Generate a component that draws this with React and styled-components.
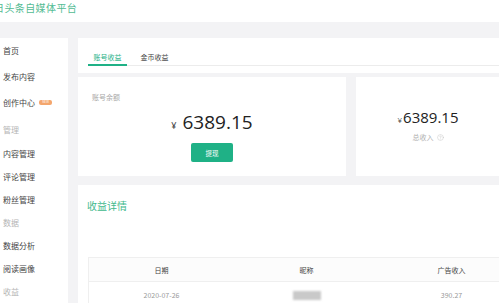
import { createGlobalStyle, styled } from "styled-components";
import { CircleHelp } from "lucide-react";

const GlobalStyle = createGlobalStyle`
  body {
    margin: 0;
    background: #fff;
    font-family: "Noto Sans CJK SC", "Noto Sans", sans-serif;
    overflow: hidden;
  }
`;

const green = "#1fb186";

const Page = styled.div`
  width: 499px;
  height: 303px;
  overflow: hidden;
  display: flex;
  flex-direction: column;
  background: #f3f3f5;
`;

const Header = styled.div`
  height: 22px;
  flex-shrink: 0;
  background: #fff;
  display: flex;
  align-items: flex-start;
  overflow: hidden;
`;

const Title = styled.div`
  margin-top: 1px;
  text-indent: -6px;
  font-size: 10px;
  line-height: 14px;
  color: #52bb93;
  letter-spacing: 0.4px;
  white-space: nowrap;
`;

const Body = styled.div`
  flex: 1;
  display: flex;
  padding-top: 16px;
  min-height: 0;
`;

const Sidebar = styled.div`
  width: 68px;
  flex-shrink: 0;
  background: #fff;
  display: flex;
  flex-direction: column;
`;

const NavItem = styled.div`
  height: ${(p) => p.$h}px;
  flex-shrink: 0;
  display: flex;
  align-items: center;
  gap: 4px;
  padding-left: 3px;
  font-size: 8px;
  color: ${(p) => (p.$heading ? "#b5b5b5" : "#444")};
  white-space: nowrap;
`;

const Badge = styled.span`
  display: inline-block;
  width: 13px;
  height: 5px;
  border-radius: 2px;
  background: #f4a66d;
  font-size: 3px;
  line-height: 5px;
  color: #fff;
  text-align: center;
`;

const Main = styled.div`
  width: 422px;
  margin-left: 10px;
  display: flex;
  flex-direction: column;
  flex-shrink: 0;
`;

const Card = styled.div`
  background: #fff;
  flex-shrink: 0;
`;

const TabCard = styled(Card)`
  height: 35px;
  padding: 0 0 0 10px;
  box-sizing: border-box;
`;

const TabBar = styled.div`
  height: 27px;
  display: flex;
  gap: 8px;
  border-bottom: 1px solid #ececec;
`;

const Tab = styled.div`
  width: 39px;
  box-sizing: border-box;
  padding-top: 14px;
  text-align: center;
  font-size: 7px;
  line-height: 10px;
  color: ${(p) => (p.$active ? green : "#444")};
  border-bottom: 2px solid ${(p) => (p.$active ? green : "transparent")};
  margin-bottom: -1px;
`;

const Row = styled.div`
  margin-top: 4px;
  height: 99px;
  display: flex;
  gap: 10px;
  flex-shrink: 0;
`;

const Balance = styled(Card)`
  width: 268px;
  padding: 15px 14px 0;
  box-sizing: border-box;
  display: flex;
  flex-direction: column;
`;

const Label = styled.div`
  font-size: 7px;
  line-height: 10px;
  color: #a8a8a8;
`;

const Amount = styled.div`
  margin-top: 9px;
  align-self: center;
  font-family: "Open Sans", "Noto Sans", sans-serif;
  font-size: ${(p) => p.$size}px;
  line-height: 22px;
  color: #222;
  display: flex;
  align-items: baseline;
`;

const Yen = styled.span`
  font-size: ${(p) => p.$size}px;
  color: #444;
  margin-right: ${(p) => p.$gap}px;
`;

const Button = styled.div`
  margin-top: 6px;
  align-self: center;
  width: 42px;
  height: 19px;
  border-radius: 2px;
  background: ${green};
  color: #fff;
  font-size: 6.5px;
  display: flex;
  align-items: center;
  justify-content: center;
`;

const Total = styled(Card)`
  flex: 1;
  display: flex;
  flex-direction: column;
  align-items: center;
  padding-top: 29px;
  box-sizing: border-box;
`;

const TotalAmount = styled(Amount)`
  margin-top: 0;
  line-height: 22px;
`;

const TotalLabel = styled(Label)`
  display: flex;
  align-items: center;
  gap: 3px;
  margin-top: 1px;
  color: #b0b0b0;
`;

const Details = styled(Card)`
  margin-top: 9px;
  flex: 1;
  padding: 14px 0 0 10px;
  box-sizing: border-box;
`;

const SectionTitle = styled.div`
  font-size: 10px;
  line-height: 14px;
  color: #3fb98d;
  margin-left: -1px;
`;

const Table = styled.div`
  margin-top: 44px;
  width: 435px;
  border-top: 1px solid #efefef;
  border-left: 1px solid #efefef;
`;

const TRow = styled.div`
  display: grid;
  grid-template-columns: repeat(3, 1fr);
  height: ${(p) => (p.$head ? 23 : 26)}px;
  align-items: center;
  background: ${(p) => (p.$head ? "#fcfcfc" : "#fff")};
  border-bottom: 1px solid #efefef;
`;

const Cell = styled.div`
  text-align: center;
  font-size: 7px;
  color: ${(p) => (p.$head ? "#444" : "#999")};
  display: flex;
  justify-content: center;
`;

const Blurred = styled.div`
  width: 28px;
  height: 9px;
  background: #c9c9c9;
  filter: blur(0.8px);
`;

const nav = [
  { t: "首页", h: 25 },
  { t: "发布内容", h: 26 },
  { t: "创作中心", h: 27, badge: true },
  { t: "管理", h: 26, heading: true },
  { t: "内容管理", h: 23 },
  { t: "评论管理", h: 23 },
  { t: "粉丝管理", h: 22 },
  { t: "数据", h: 24, heading: true },
  { t: "数据分析", h: 23 },
  { t: "阅读画像", h: 23 },
  { t: "收益", h: 23, heading: true },
];

export default function App() {
  return (
    <>
      <GlobalStyle />
      <Page>
        <Header>
          <Title>日头条自媒体平台</Title>
        </Header>
        <Body>
          <Sidebar>
            {nav.map((n) => (
              <NavItem key={n.t} $h={n.h} $heading={n.heading}>
                {n.t}
                {n.badge && <Badge>NEW</Badge>}
              </NavItem>
            ))}
          </Sidebar>
          <Main>
            <TabCard>
              <TabBar>
                <Tab $active>账号收益</Tab>
                <Tab>金币收益</Tab>
              </TabBar>
            </TabCard>
            <Row>
              <Balance>
                <Label>账号余额</Label>
                <Amount $size={19}>
                  <Yen $size={9} $gap={6}>¥</Yen>6389.15
                </Amount>
                <Button>提现</Button>
              </Balance>
              <Total>
                <TotalAmount $size={15}>
                  <Yen $size={8} $gap={1}>¥</Yen>6389.15
                </TotalAmount>
                <TotalLabel>
                  总收入 <CircleHelp size={7} strokeWidth={1.5} color="#c0c0c0" />
                </TotalLabel>
              </Total>
            </Row>
            <Details>
              <SectionTitle>收益详情</SectionTitle>
              <Table>
                <TRow $head>
                  <Cell $head>日期</Cell>
                  <Cell $head>昵称</Cell>
                  <Cell $head>广告收入</Cell>
                </TRow>
                <TRow>
                  <Cell>2020-07-26</Cell>
                  <Cell>
                    <Blurred />
                  </Cell>
                  <Cell>390.27</Cell>
                </TRow>
              </Table>
            </Details>
          </Main>
        </Body>
      </Page>
    </>
  );
}
